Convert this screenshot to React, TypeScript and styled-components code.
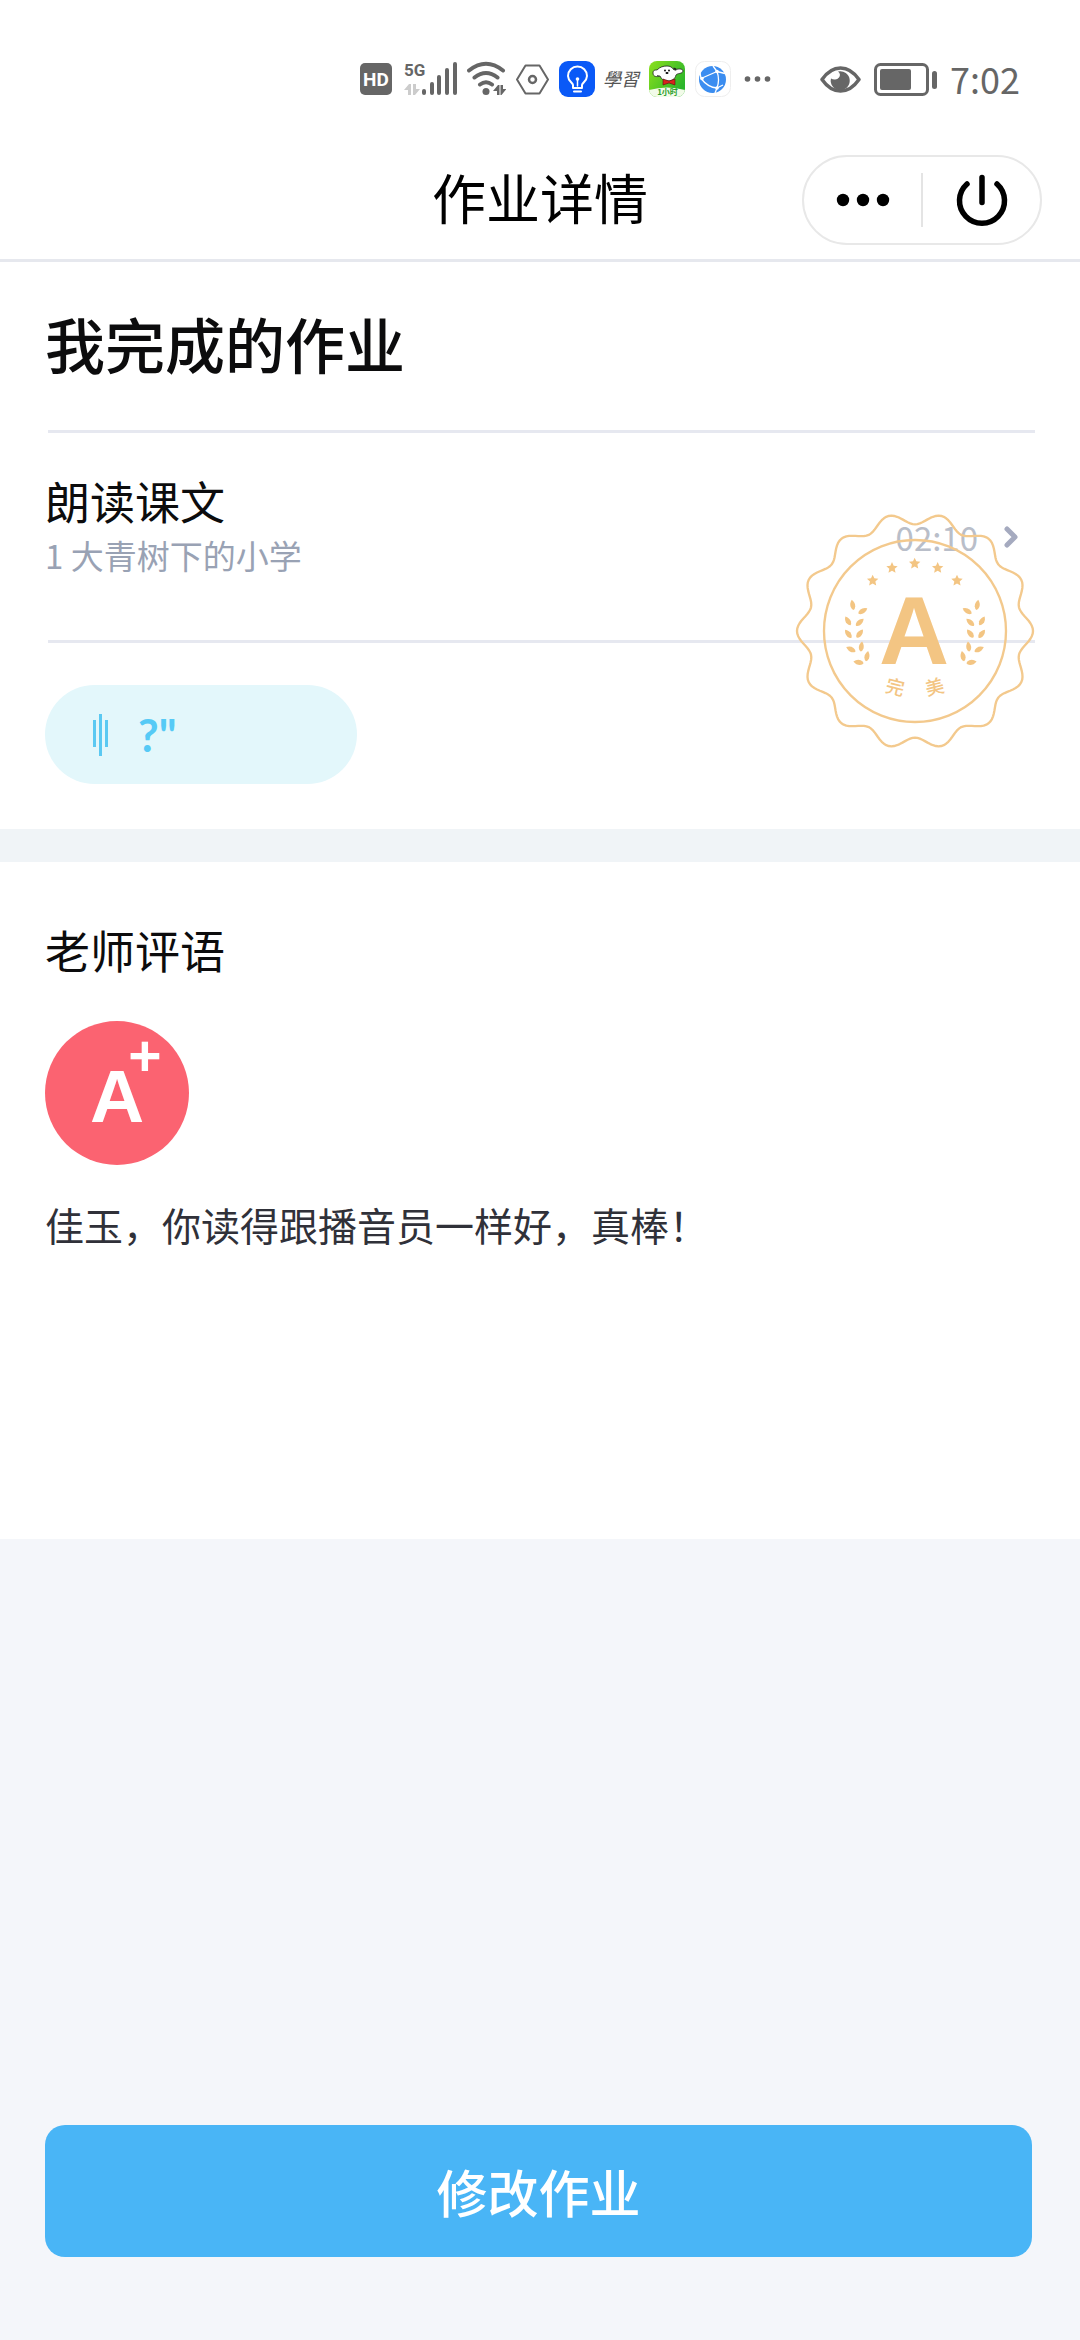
import React from "react";
import styled, { createGlobalStyle } from "styled-components";

const sans = `"Noto Sans CJK SC", "Noto Sans", sans-serif`;

const GlobalStyle = createGlobalStyle`
  * { box-sizing: border-box; }
  body { margin: 0; background: #f4f6fa; font-family: ${sans}; color: #0c0c0d; }
  h1, h2, h3, p { margin: 0; font-weight: 400; }
  button { border: 0; padding: 0; margin: 0; background: none; font-family: inherit; color: inherit; cursor: pointer; }
  svg { display: block; flex: none; }
`;

const Page = styled.div`
  min-height: 100vh;
  display: flex;
  flex-direction: column;
`;

const StatusBar = styled.div`
  display: flex;
  justify-content: flex-end;
  align-items: center;
  gap: 47px;
  height: 140px;
  padding: 18px 60px 0 0;
  background: #fff;
  color: #666;
`;

const StatusGroup = styled.div<{ $gap: number }>`
  display: flex;
  align-items: center;
  gap: ${(p) => p.$gap}px;
`;

const Clock = styled.time`
  font-size: 36px;
  line-height: 40px;
  padding-bottom: 2px;
`;

const NavBar = styled.header`
  display: grid;
  grid-template-columns: 1fr auto 1fr;
  align-items: center;
  height: 122px;
  padding: 0 38px;
  background: #fff;
  border-bottom: 3px solid #e6e8ee;
`;

const NavTitle = styled.h1`
  grid-column: 2;
  padding-bottom: 6px;
  font-size: 54px;
  line-height: 72px;
  color: #000;
`;

const Capsule = styled.div`
  justify-self: end;
  display: flex;
  align-items: center;
  width: 240px;
  height: 90px;
  border: 2px solid #e8e8e8;
  border-radius: 45px;
`;

const CapsuleButton = styled.button`
  flex: 1;
  height: 100%;
  display: flex;
  align-items: center;
  justify-content: center;
`;

const CapsuleRule = styled.span`
  width: 2px;
  height: 54px;
  background: #e4e4e4;
`;

const Panel = styled.section<{ $bottom: number }>`
  padding: 0 45px ${(p) => p.$bottom}px;
  background: #fff;
`;

const PanelTitle = styled.h2`
  padding: 42px 0 48px;
  font-size: 60px;
  line-height: 78px;
  font-weight: 500;
`;

const Divider = styled.hr`
  height: 3px;
  margin: 0 0 0 3px;
  border: 0;
  background: #e6e8f0;
`;

const Task = styled.div`
  position: relative;
`;

const TaskRow = styled.button`
  display: flex;
  justify-content: space-between;
  align-items: center;
  width: 100%;
  height: 207px;
  padding: 0 15px 24px 0;
  text-align: left;
`;

const ItemTitle = styled.div`
  font-size: 45px;
  line-height: 60px;
`;

const ItemNote = styled.div`
  font-size: 33px;
  line-height: 48px;
  color: #99a2b4;
`;

const TaskTime = styled.span`
  display: flex;
  align-items: center;
  gap: 24px;
  padding-top: 24px;
  font-size: 33px;
  line-height: 48px;
  color: #b9bec9;
`;

const StampBox = styled.div`
  position: absolute;
  right: 0;
  top: 78px;
  pointer-events: none;
`;

const VoicePill = styled.button`
  display: flex;
  align-items: center;
  gap: 30px;
  width: 312px;
  height: 99px;
  margin-top: 42px;
  padding: 0 48px;
  border-radius: 50px;
  background: #e3f7fb;
  color: #56caf6;
  font-family: Lato, ${sans};
  font-size: 45px;
  font-weight: 700;
  line-height: 60px;
`;

const Band = styled.div`
  height: 33px;
  background: #f0f4f7;
`;

const ReviewTitle = styled.h2`
  padding: 55px 0 38px;
  font-size: 45px;
  line-height: 66px;
`;

const ReviewText = styled.p`
  margin: 31px 0 2px;
  font-size: 39px;
  line-height: 57px;
  color: #303139;
`;

const Footer = styled.footer`
  margin-top: auto;
  padding: 45px 48px 83px 45px;
`;

const PrimaryButton = styled.button`
  width: 100%;
  height: 132px;
  border-radius: 20px;
  background: #49b5f6;
  color: #fff;
  font-size: 51px;
  line-height: 72px;
  font-weight: 500;
`;

const HdIcon = () => (
  <svg width="32" height="32" viewBox="0 0 32 32">
    <rect width="32" height="32" rx="5" fill="#666" />
    <text x="16" y="23" textAnchor="middle" fontFamily="Roboto, sans-serif" fontWeight="700" fontSize="19" fill="#fff">HD</text>
  </svg>
);

const SignalIcon = () => (
  <svg width="55" height="36" viewBox="0 0 55 36" fill="#666">
    <text x="2" y="15" fontFamily="'Liberation Sans Narrow', Roboto, sans-serif" fontWeight="700" fontSize="17">5G</text>
    <path d="M2 29l5-6h2v11H6v-5zM18 28l-5 6h-2V23h3v5z" fill="#ccc" />
    {[[20, 28], [28, 21], [35, 14], [43, 7], [51, 1]].map(([x, y]) => (
      <rect key={x} x={x} y={y} width="4" height={34 - y} rx="2" />
    ))}
  </svg>
);

const WifiIcon = () => (
  <svg width="39" height="36" viewBox="0 0 39 36" fill="none" stroke="#666" strokeWidth="4" strokeLinecap="round">
    <path d="M2 9.500Q19 -4 36 9.500M7.500 16.500Q19 7.500 30.500 16.500M13 23.500Q19 19 25 23.500" />
    <circle cx="19" cy="30.500" r="3.500" fill="#666" stroke="none" />
    <path d="M26 30l5-6h1.500v10H30v-4zM39.500 28l-5 6h-1V24h2.500v4z" fill="#666" stroke="none" />
  </svg>
);

const HexIcon = () => (
  <svg width="33" height="36" viewBox="0 0 33 36" fill="none" stroke="#666" strokeLinejoin="round">
    <path d="M9.500 4.500h14L32 18.500l-8.500 14h-14L1 18.500z" strokeWidth="2" />
    <circle cx="16.500" cy="18.500" r="3.500" strokeWidth="2.500" />
  </svg>
);

const BulbIcon = () => (
  <svg width="36" height="36" viewBox="0 0 36 36" fill="none" stroke="#fff" strokeLinecap="round">
    <rect width="36" height="36" rx="9" fill="#0a59f7" stroke="none" />
    <path d="M14 26.500v-2.500c0-2-5-4-5-9a9.500 9.500 0 0 1 19 0c0 5-5 7-5 9v2.500M14 27h9M15 30.500h7" strokeWidth="2" />
    <path d="M18.500 19v6" strokeWidth="1.500" />
    <circle cx="18.500" cy="18" r="1.800" fill="#fff" stroke="none" />
  </svg>
);

const StudySvg = styled.svg`
  margin: 0 -4px;
`;

const StudyIcon = () => (
  <StudySvg width="42" height="36" viewBox="0 0 42 36">
    <text x="2" y="25" fontFamily={sans} fontStyle="italic" fontSize="18" fill="#555">學習</text>
  </StudySvg>
);

const ShopIcon = () => (
  <svg width="36" height="36" viewBox="0 0 36 36">
    <defs>
      <clipPath id="shop"><rect width="36" height="36" rx="8" /></clipPath>
      <linearGradient id="leaf" x1="0" x2="1" y1="0" y2="0.600">
        <stop offset="0" stopColor="#8ce01c" />
        <stop offset="1" stopColor="#2bb52b" />
      </linearGradient>
    </defs>
    <g clipPath="url(#shop)">
      <rect width="36" height="36" fill="url(#leaf)" />
      <path d="M0 29Q18 24 36 29V36H0z" fill="#f2fbe9" />
      <path d="M4 12c0-3 2-3 4-3 3-3 6-4 10-4 3 0 5 1 7 4 3-1 9-2 9 1 0 3-6 2-7 4-1 4-4 6-8 6-4 0-7-2-8-5-3 1-7 1-7-3z" fill="#fff" stroke="#222" strokeWidth="0.800" />
      <path d="M24 7c3-1 4 1 3 3z" fill="#222" />
      <path d="M11 15c-2 1-3 0-3-1z" fill="#222" />
      <circle cx="16" cy="9.500" r="0.900" />
      <circle cx="20" cy="9.500" r="0.900" />
      <ellipse cx="18" cy="12" rx="1.500" ry="0.900" />
      <path d="M14 18l6 2 6-2v6l-6-2-6 2z" fill="#d9231c" stroke="#511" strokeWidth="0.600" />
      <text x="18.500" y="34" textAnchor="middle" fontFamily={sans} fontWeight="700" fontSize="8" fill="#2ca02c">1小时</text>
    </g>
  </svg>
);

const GlobeIcon = () => (
  <svg width="36" height="36" viewBox="0 0 36 36">
    <rect x="0.500" y="0.500" width="35" height="35" rx="9" fill="#fff" stroke="#eee" />
    <circle cx="17.500" cy="18.500" r="13.500" fill="#3b8df0" />
    <path d="M6 17.500L22 10.500M6 17.500q7 9 16 9.500M22 10.500q3 8 0 16.500M22 10.500l8 2M22 27l6-3M6 17.500l-1-6M22 10.500L18 5M22 27l-2 5" stroke="#fff" strokeWidth="1.300" fill="none" />
    <g fill="#fff"><circle cx="7" cy="17.500" r="1.800" /><circle cx="22" cy="10.500" r="1.800" /><circle cx="22" cy="27" r="1.800" /></g>
  </svg>
);

const MoreDots = () => (
  <svg width="32" height="36" viewBox="0 0 32 36" fill="#666">
    {[6.5, 16.5, 26.5].map((x) => <circle key={x} cx={x} cy="18" r="2.800" />)}
  </svg>
);

const EyeIcon = () => (
  <svg width="41" height="36" viewBox="0 0 41 36" fill="none" stroke="#666" strokeWidth="3.500">
    <path d="M2 18.500Q10 7 20.500 7T39 18.500Q31 30 20.500 30T2 18.500z" strokeLinejoin="round" />
    <path d="M18 10.500a9.500 9.500 0 1 1-7 7 6 6 0 0 0 8-1 4 4 0 0 0-1-6z" fill="#666" stroke="none" />
  </svg>
);

const BatteryIcon = () => (
  <svg width="63" height="36" viewBox="0 0 63 36">
    <rect x="1.500" y="3.500" width="52" height="30" rx="5" fill="none" stroke="#666" strokeWidth="3" />
    <rect x="6" y="8" width="31" height="21" rx="2" fill="#666" />
    <rect x="58" y="10" width="5" height="18" rx="2.500" fill="#666" />
  </svg>
);

const MenuDots = () => (
  <svg width="56" height="20" viewBox="0 0 56 20">
    {[8, 28, 48].map((x) => <circle key={x} cx={x} cy="10" r="6.200" />)}
  </svg>
);

const PowerIcon = () => (
  <svg width="54" height="54" viewBox="0 0 54 54" fill="none" stroke="#000" strokeWidth="5.500" strokeLinecap="round">
    <path d="M27 4.500v25M12 11a22.500 22.500 0 1 0 30 0" />
  </svg>
);

const Chevron = () => (
  <svg width="18" height="24" viewBox="0 0 18 24" fill="none" stroke="#a5aabf" strokeWidth="5" strokeLinecap="round" strokeLinejoin="round">
    <path d="M5 4l8 8-8 8" />
  </svg>
);

const WaveIcon = () => (
  <svg width="15" height="42" viewBox="0 0 15 42" fill="#5bc9f2">
    <rect x="0" y="6" width="3" height="27" />
    <rect x="6" y="0" width="3" height="42" />
    <rect x="12" y="6" width="3" height="27" />
  </svg>
);

const scallop = Array.from({ length: 280 }, (_, i) => {
  const t = (i / 280) * Math.PI * 2;
  const r = 337 + 17 * Math.cos(14 * t);
  return `${i ? "L" : "M"}${(r * Math.cos(t)).toFixed(1)} ${(r * Math.sin(t)).toFixed(1)}`;
}).join("") + "Z";

const star = Array.from({ length: 10 }, (_, i) => {
  const t = (i * Math.PI) / 5 - Math.PI / 2;
  const r = i % 2 ? 8.5 : 18;
  return `${(r * Math.cos(t)).toFixed(1)},${(r * Math.sin(t)).toFixed(1)}`;
}).join(" ");

const stars = [[-127, -151], [-69, -189], [-1, -202], [68, -189], [126, -151]];
const leaves = [
  [-187, -78, -10], [-157, -60, 60], [-201, -30, -30], [-166, -26, 48], [-200, 9, -38],
  [-166, 8, 38], [-192, 55, -65], [-161, 47, 8], [-169, 94, -80], [-144, 76, 12],
];

const Laurel = () => (
  <>
    {leaves.map(([x, y, a]) => (
      <path key={`${x},${y}`} d="M0-16Q9-6 7 5Q5 13 0 15Q-5 13-7 5Q-9-6 0-16z" transform={`translate(${x} ${y}) rotate(${a})`} />
    ))}
  </>
);

const Stamp = () => (
  <svg width="240" height="240" viewBox="-360 -360 720 720" fill="#f3c583">
    <g fill="none" stroke="#f3c98d" strokeWidth="7">
      <path d={scallop} strokeLinejoin="round" />
      <circle r="273" />
    </g>
    {stars.map(([x, y]) => <polygon key={x} points={star} transform={`translate(${x} ${y})`} />)}
    <Laurel />
    <g transform="scale(-1 1)"><Laurel /></g>
    <text x="-3" y="100" textAnchor="middle" fontFamily="'Liberation Sans', Arial, sans-serif" fontWeight="700" fontSize="291">A</text>
    <g fontFamily={sans} fontWeight="500" fontSize="56" textAnchor="middle">
      <text transform="translate(-64 188) rotate(14)">完</text>
      <text transform="translate(64 188) rotate(-14)">美</text>
    </g>
  </svg>
);

const GradeBadge = () => (
  <svg width="144" height="144" viewBox="0 0 144 144" fill="#fff">
    <circle cx="72" cy="72" r="72" fill="#fb6371" />
    <text x="72" y="101" textAnchor="middle" fontFamily="'Liberation Sans', Arial, sans-serif" fontWeight="700" fontSize="75">A</text>
    <text x="100" y="55" textAnchor="middle" fontFamily="'Liberation Sans', Arial, sans-serif" fontWeight="700" fontSize="57">+</text>
  </svg>
);

export default function App() {
  return (
    <Page>
      <GlobalStyle />
      <StatusBar>
        <StatusGroup $gap={10}>
          <HdIcon />
          <SignalIcon />
          <WifiIcon />
          <HexIcon />
          <BulbIcon />
          <StudyIcon />
          <ShopIcon />
          <GlobeIcon />
          <MoreDots />
        </StatusGroup>
        <StatusGroup $gap={13}>
          <EyeIcon />
          <BatteryIcon />
          <Clock>7:02</Clock>
        </StatusGroup>
      </StatusBar>
      <NavBar>
        <NavTitle>作业详情</NavTitle>
        <Capsule>
          <CapsuleButton aria-label="更多"><MenuDots /></CapsuleButton>
          <CapsuleRule />
          <CapsuleButton aria-label="关闭"><PowerIcon /></CapsuleButton>
        </Capsule>
      </NavBar>
      <main>
        <Panel $bottom={45}>
          <PanelTitle>我完成的作业</PanelTitle>
          <Divider />
          <Task>
            <TaskRow>
              <div>
                <ItemTitle>朗读课文</ItemTitle>
                <ItemNote>1 大青树下的小学</ItemNote>
              </div>
              <TaskTime>02:10<Chevron /></TaskTime>
            </TaskRow>
            <Divider />
            <StampBox><Stamp /></StampBox>
          </Task>
          <VoicePill>
            <WaveIcon />
            <span>?"</span>
          </VoicePill>
        </Panel>
        <Band />
        <Panel $bottom={284}>
          <ReviewTitle>老师评语</ReviewTitle>
          <GradeBadge />
          <ReviewText>佳玉，你读得跟播音员一样好，真棒！</ReviewText>
        </Panel>
      </main>
      <Footer>
        <PrimaryButton>修改作业</PrimaryButton>
      </Footer>
    </Page>
  );
}
